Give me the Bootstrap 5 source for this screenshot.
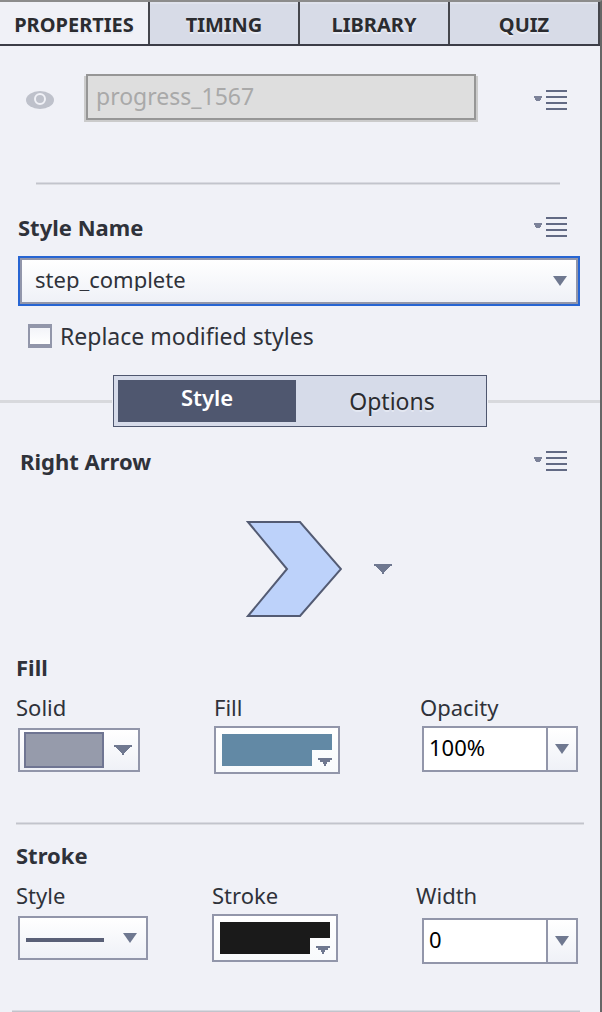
<!DOCTYPE html>
<html lang="en">
<head>
<meta charset="utf-8">
<meta name="viewport" content="width=device-width, initial-scale=1">
<title>Properties</title>
<link href="https://cdn.jsdelivr.net/npm/bootstrap@5.3.0/dist/css/bootstrap.min.css" rel="stylesheet">
<style>
  :root { --ink: #2f323a; --edge: #9296aa; --slate: #6f7890; --deep: #4f576f; --tint: #d6dbe9; --paper: #f0f1f7; }
  body { font-family: "Noto Sans", "Open Sans", sans-serif; font-size: 22px; line-height: 24px; color: var(--ink); background: var(--paper); }
  .panel { min-height: 100vh; border-top: 2px solid #8c8c8c; border-right: 2px solid #666; }
  h2 { font-size: 22px; line-height: 24px; font-weight: 700; margin: 0; }
  svg { display: block; }

  .tabs { border-bottom: 2px solid #3c3d47; }
  .tabs button { flex: 1 1 0; height: 42px; padding: 4px 0 0; border: 0; border-right: 2px solid #45464d; background: #d7dbe7; color: #2b2c30; font-size: 20px; font-weight: 700; text-shadow: 0 2px 0 #e8ebf3; line-height: 24px; box-shadow: inset 0 2px 0 #dfe2ec; }
  .tabs button.active { background: var(--paper); box-shadow: none; }

  .name-row { padding: 28px 32px 0 26px; }
  .name-row .menu-btn { padding-top: 6px; }
  .name-box { height: 46px; max-width: 390px; margin-left: 32px; padding: 0 8px 2px; border: 2px solid #969696; border-radius: 0; background: #dedede; color: #a9a9a9; font-size: 23px; box-shadow: -2px 2px 0 #cbcbcb, 2px 2px 0 #cbcbcb; }
  .name-box:disabled { background: #dedede; opacity: 1; color: #a9a9a9; }
  .menu-btn { border: 0; padding: 0; background: none; }

  .rule { height: 3px; margin: 0; border: 0; opacity: 1; background: linear-gradient(#d9dae1 0 1px, #c2c4cc 1px 2px, #dcdde2 2px); }
  .rule-name { margin: 62px 40px 0 36px; }
  .rule-pale { background: #d8d9dd; }

  .style-head { padding: 30px 32px 0 18px; }
  .style-pick { margin: 17px 20px 0 18px; border: 2px solid #2765d3; }
  .pick { width: 100%; appearance: none; border: 2px solid var(--edge); border-radius: 0; background: linear-gradient(#fff, #eff1f7); color: var(--ink); }
  .pick-style { height: 46px; padding: 0 48px 4px 13px; }
  .over { position: absolute; pointer-events: none; }
  .caret-end { right: 11px; top: 50%; transform: translateY(-50%); }
  .caret-end-wide { right: 8px; top: 50%; transform: translateY(-50%); }

  .check-row { padding: 18px 28px 0; }
  .check-row label { font-size: 23px; }
  .tick { appearance: none; width: 24px; height: 24px; margin: 0 8px 0 0; border: 2px solid var(--edge); border-width: 4px 2px; background: linear-gradient(#f3f4f9, #fff); }

  .seg-row { margin-top: 27px; gap: 1px; }
  .seg { width: 374px; height: 52px; padding: 4px; border: 1px solid var(--deep); background: var(--tint); }
  .seg button { flex: 1 1 0; border: 0; padding: 0 0 0 6px; background: none; color: #2b2c30; font-size: 23px; line-height: 24px; text-shadow: 0 2px 0 #e4e8f2; }
  .seg button.active { flex: 0 0 178px; padding: 0 0 8px; background: var(--deep); color: #fff; font-size: 22px; font-weight: 600; text-shadow: none; }

  .shape-head { padding: 22px 32px 0 20px; }
  .shape-btn { display: flex; align-items: center; gap: 32px; margin: 47px 0 0 246px; border: 0; padding: 0; background: none; }

  .group { padding: 0 16px; }
  .group-fill { padding-top: 37px; }
  .group-stroke { padding-top: 18px; }
  .fields { display: grid; align-items: start; margin-top: 16px; }
  .fields-fill { grid-template-columns: 198fr 206fr 164fr; }
  .fields-stroke { grid-template-columns: 196fr 204fr 168fr; }
  .fields label { display: block; }
  .pick-sm { height: 44px; }
  .box-solid { width: 122px; margin: 9px 0 0 2px; }
  .box-line { width: 130px; margin: 9px 0 0 2px; }
  .solid-chip { left: 6px; top: 4px; width: 80px; height: 36px; border: 2px solid #6f7592; background: #969bab; }
  .swatch { display: block; width: 126px; height: 48px; margin-top: 7px; padding: 6px; border: 2px solid var(--edge); background: linear-gradient(#fff, #f8fafc); }
  .combo { width: 156px; margin: 7px 6px 0 auto; }
  .combo-low { margin-top: 11px; }
  .combo input { height: 46px; padding: 0 5px 4px; border: 2px solid var(--edge); border-radius: 0; color: #000; font-size: 22px; background: #fff; }
  .combo button { width: 30px; padding: 0; border: 2px solid var(--edge); border-left: 0; background: linear-gradient(#fff, #eff1f7); }
  .combo button svg { margin: 0 auto; }
  .rule-mid { margin: 48px 16px 0; }
  .rule-end { margin: 46px 20px 0 12px; height: 2px; }
</style>
</head>
<body>
<svg class="d-none" aria-hidden="true">
  <symbol id="menu" viewBox="0 0 34 24">
    <path d="M0 8h8v2h-1v2h-1v1h-4v-1h-1v-2h-1z" fill="#7c8299"/>
    <path d="M12 2h21v2H12zM12 8h21v2H12zM12 14h21v2H12zM12 20h21v2H12z" fill="#626a84"/>
  </symbol>
  <symbol id="caret" viewBox="0 0 14 10"><path d="M0 0h14L7 10z" fill="#6f7890"/></symbol>
  <symbol id="caret-wide" viewBox="0 0 18 10"><path d="M0 0h18v2h-2v1h-1v1h-1v1h-1v1h-1v1h-1v1h-1v2H8V8H7V7H6V6H5V5H4V4H3V3H2V2H0z" fill="#6f7890"/></symbol>
</svg>
<main class="panel">
  <nav class="tabs d-flex" role="tablist">
    <button type="button" role="tab" class="active" aria-selected="true">PROPERTIES</button>
    <button type="button" role="tab">TIMING</button>
    <button type="button" role="tab">LIBRARY</button>
    <button type="button" role="tab">QUIZ</button>
  </nav>

  <div class="name-row d-flex align-items-center">
    <button type="button" class="menu-btn flex-shrink-0" aria-label="Toggle visibility">
      <svg width="28" height="18" viewBox="0 0 28 18"><ellipse cx="14" cy="9" rx="14" ry="9" fill="#bec1cb"/><circle cx="14" cy="8" r="5" fill="#bec1cb" stroke="#f0f1f7" stroke-width="2"/></svg>
    </button>
    <input class="name-box form-control" type="text" value="progress_1567" aria-label="Object name" disabled>
    <button type="button" class="menu-btn ms-auto" aria-label="Object menu"><svg width="34" height="24"><use href="#menu"/></svg></button>
  </div>
  <hr class="rule rule-name">

  <div class="style-head d-flex align-items-center justify-content-between">
    <h2><label for="styleName">Style Name</label></h2>
    <button type="button" class="menu-btn" aria-label="Style menu"><svg width="34" height="24"><use href="#menu"/></svg></button>
  </div>
  <div class="style-pick position-relative">
    <select id="styleName" class="pick pick-style d-block"><option>step_complete</option></select>
    <svg class="over caret-end" width="14" height="10"><use href="#caret"/></svg>
  </div>
  <div class="check-row d-flex align-items-center">
    <input class="tick" type="checkbox" id="replace">
    <label for="replace">Replace modified styles</label>
  </div>

  <div class="seg-row d-flex align-items-center">
    <hr class="rule rule-pale flex-fill">
    <div class="seg d-flex" role="tablist">
      <button type="button" role="tab" class="active" aria-selected="true">Style</button>
      <button type="button" role="tab">Options</button>
    </div>
    <hr class="rule rule-pale flex-fill">
  </div>

  <div class="shape-head d-flex align-items-center justify-content-between">
    <h2>Right Arrow</h2>
    <button type="button" class="menu-btn" aria-label="Shape menu"><svg width="34" height="24"><use href="#menu"/></svg></button>
  </div>
  <button type="button" class="shape-btn" aria-label="Choose shape">
    <svg width="96" height="98" viewBox="0 0 96 98"><path d="M2 2h52l41 47-41 47H2l39-47z" fill="#bdd2fa" stroke="#535b73" stroke-width="2"/></svg>
    <svg width="18" height="10"><use href="#caret-wide"/></svg>
  </button>

  <section class="group group-fill">
    <h2>Fill</h2>
    <div class="fields fields-fill">
      <div>
        <label for="fillType">Solid</label>
        <div class="box-solid position-relative">
          <select id="fillType" class="pick pick-sm d-block"><option value="solid"></option></select>
          <span class="over solid-chip"></span>
          <svg class="over caret-end-wide" width="18" height="10"><use href="#caret-wide"/></svg>
        </div>
      </div>
      <div>
        <label for="fillColor">Fill</label>
        <button type="button" id="fillColor" class="swatch">
          <svg width="110" height="32" viewBox="0 0 110 32"><path d="M0 0h110v16H90v16H0z" fill="#6289a5"/><path d="M96 24h14v2h-2v2h-3v2h-1v2h-2v-2h-1v-2h-3v-2h-2z" fill="#6f7890"/></svg>
        </button>
      </div>
      <div>
        <label for="opacity">Opacity</label>
        <div class="combo d-flex">
          <input class="form-control" type="text" id="opacity" value="100%">
          <button type="button" class="flex-shrink-0" aria-label="Adjust opacity"><svg width="14" height="10"><use href="#caret"/></svg></button>
        </div>
      </div>
    </div>
  </section>
  <hr class="rule rule-mid">

  <section class="group group-stroke">
    <h2>Stroke</h2>
    <div class="fields fields-stroke">
      <div>
        <label for="lineStyle">Style</label>
        <div class="box-line position-relative">
          <select id="lineStyle" class="pick pick-sm d-block"><option value="line"></option></select>
          <svg class="over top-0 start-0" width="100" height="44"><path d="M8 24h78" stroke="#5a6077" stroke-width="4"/></svg>
          <svg class="over caret-end" width="14" height="10"><use href="#caret"/></svg>
        </div>
      </div>
      <div>
        <label for="strokeColor">Stroke</label>
        <button type="button" id="strokeColor" class="swatch">
          <svg width="110" height="32" viewBox="0 0 110 32"><path d="M0 0h110v16H90v16H0z" fill="#1a1a1a"/><path d="M96 24h14v2h-2v2h-3v2h-1v2h-2v-2h-1v-2h-3v-2h-2z" fill="#6f7890"/></svg>
        </button>
      </div>
      <div>
        <label for="strokeWidth">Width</label>
        <div class="combo combo-low d-flex">
          <input class="form-control" type="text" id="strokeWidth" value="0">
          <button type="button" class="flex-shrink-0" aria-label="Adjust width"><svg width="14" height="10"><use href="#caret"/></svg></button>
        </div>
      </div>
    </div>
  </section>
  <hr class="rule rule-end">
</main>
<script src="https://cdn.jsdelivr.net/npm/bootstrap@5.3.0/dist/js/bootstrap.bundle.min.js"></script>
</body>
</html>
